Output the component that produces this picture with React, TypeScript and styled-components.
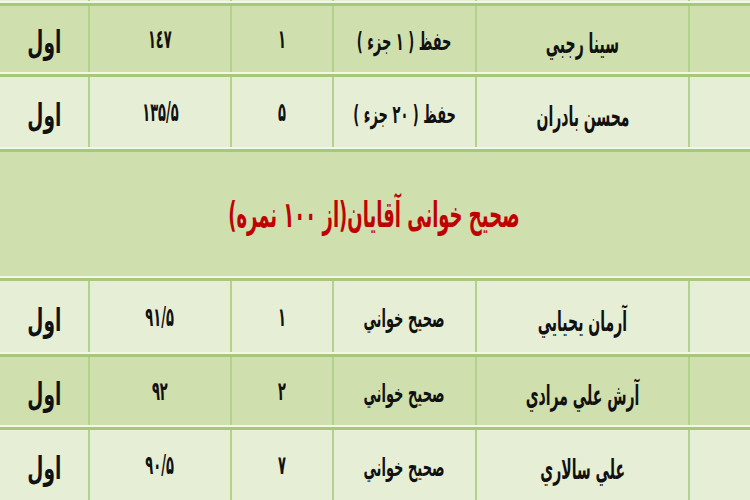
import React from "react";
import styled, { createGlobalStyle } from "styled-components";

const GlobalStyle = createGlobalStyle`
  html, body {
    margin: 0;
    padding: 0;
    background: #e6efd6;
    overflow: hidden;
  }
  body {
    font-family: "DejaVu Sans", "Noto Sans", sans-serif;
  }
`;

const LINE = "#b3d28c";
const EDGE = "#a6c878";

const Page = styled.div`
  width: 750px;
  height: 500px;
  overflow: hidden;
  display: flex;
  flex-direction: column;
`;

const RowShell = styled.div`
  background: #f3f7ea;
  padding-bottom: 2px;
  border-bottom: 3px solid ${EDGE};
`;

const Cells = styled.div<{ $h: number }>`
  display: grid;
  direction: rtl;
  grid-template-columns: 60px 211px 141px 100px 140px 88px;
  column-gap: 2px;
  background: ${LINE};
  height: ${(p) => p.$h}px;
`;

const Cell = styled.div<{ $dark?: boolean; $low?: number }>`
  background: ${(p) => (p.$dark ? "#cfe0ae" : "#e6efd6")};
  display: flex;
  align-items: center;
  justify-content: center;
  overflow: hidden;
  color: #111;
  padding-top: ${(p) => p.$low ?? 0}px;
`;

const Txt = styled.span<{ $size: number; $bold?: boolean; $sx?: number; $ltr?: boolean }>`
  font-family: "DejaVu Sans", sans-serif;
  font-size: ${(p) => p.$size}px;
  font-weight: ${(p) => (p.$bold ? 700 : 400)};
  display: inline-block;
  direction: ${(p) => (p.$ltr ? "ltr" : "rtl")};
  unicode-bidi: isolate;
  transform: scaleX(${(p) => p.$sx ?? 0.8});
  white-space: nowrap;
  line-height: 1;
`;

const Banner = styled.div`
  height: 124px;
  background: #cfe0ae;
  display: flex;
  align-items: center;
  justify-content: center;
  direction: rtl;
`;

const Title = styled.h2`
  margin: 0;
  color: #c00000;
  font-family: "DejaVu Sans", sans-serif;
  font-size: 36px;
  font-weight: 700;
  transform: scaleX(0.5);
  white-space: nowrap;
  padding-right: 6px;
`;

type Entry = {
  name: string;
  kind: string;
  num: string;
  score: string;
  rank: string;
  dark?: boolean;
};

const before: Entry[] = [
  { name: "سينا رجبي", kind: "حفظ ( ١ جزء )", num: "١", score: "١٤٧", rank: "اول", dark: true },
  { name: "محسن بادران", kind: "حفظ ( ٢٠ جزء )", num: "۵", score: "١٣۵/۵", rank: "اول" },
];

const after: Entry[] = [
  { name: "آرمان يحيايي", kind: "صحيح خواني", num: "١", score: "٩١/۵", rank: "اول" },
  { name: "آرش علي مرادي", kind: "صحيح خواني", num: "٢", score: "٩٢", rank: "اول", dark: true },
  { name: "علي سالاري", kind: "صحيح خواني", num: "٧", score: "٩٠/۵", rank: "اول" },
];

const Row = ({ e, h }: { e: Entry; h: number }) => (
  <RowShell>
    <Cells $h={h}>
      <Cell $dark={e.dark} />
      <Cell $dark={e.dark} $low={10}>
        <Txt $size={28} $bold $sx={0.5}>{e.name}</Txt>
      </Cell>
      <Cell $dark={e.dark} $low={4}>
        <Txt $size={25} $bold $sx={0.52}>{e.kind}</Txt>
      </Cell>
      <Cell $dark={e.dark}>
        <Txt $size={26} $bold $sx={0.5}>{e.num}</Txt>
      </Cell>
      <Cell $dark={e.dark}>
        <Txt $size={26} $bold $sx={0.5} $ltr>{e.score}</Txt>
      </Cell>
      <Cell $dark={e.dark} $low={6}>
        <Txt $size={32} $bold $sx={0.58}>{e.rank}</Txt>
      </Cell>
    </Cells>
  </RowShell>
);

const Sliver = () => (
  <RowShell>
    <Cells $h={1}>
      {Array.from({ length: 6 }).map((_, i) => (
        <Cell key={i} />
      ))}
    </Cells>
  </RowShell>
);

export default function App() {
  return (
    <Page>
      <GlobalStyle />
      <Sliver />
      <Row e={before[0]} h={66} />
      <Row e={before[1]} h={70} />
      <RowShell>
        <Banner>
          <Title>صحيح خوانی آقايان(از ١٠٠ نمره)</Title>
        </Banner>
      </RowShell>
      <Row e={after[0]} h={71} />
      <Row e={after[1]} h={68} />
      <Row e={after[2]} h={70} />
    </Page>
  );
}
